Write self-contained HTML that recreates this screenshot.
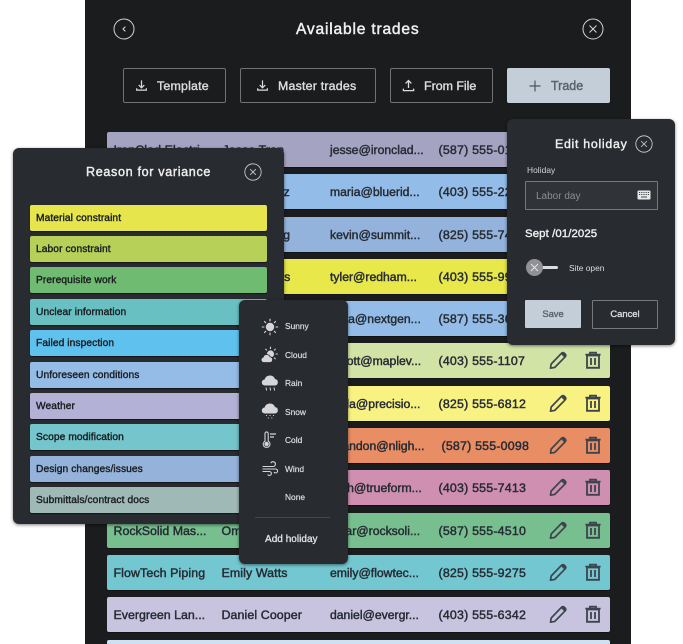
<!DOCTYPE html>
<html style="overflow:hidden;width:683px;height:644px"><head><meta charset="utf-8">
<style>
html,body{margin:0;padding:0;background:#fff}
body{width:683px;height:644px;position:relative;overflow:hidden;font-family:"Liberation Sans",Arial,sans-serif}
#wrap{position:absolute;left:0;top:0;width:683px;height:644px;overflow:hidden;contain:paint}
.a{position:absolute}
#main{left:85px;top:0;width:546px;height:644px;background:#1b1c1e}
.t{position:absolute;white-space:nowrap;line-height:14px}
.btn{position:absolute;top:68px;height:33px;border:1px solid #6f7175;border-radius:2px;background:#1b1c1e}
.btn .t{color:#dcdcdc;font-size:12.4px;top:10px;-webkit-text-stroke:.4px #dcdcdc;letter-spacing:.2px}
.row{position:absolute;left:106.5px;width:503.5px;height:35px;border-radius:2px;color:#262b33;box-shadow:0 1px 0 rgba(0,0,0,.35)}
.row .t{top:11px;font-size:12.4px;-webkit-text-stroke:.45px #262b33;letter-spacing:.1px}
.row .e{letter-spacing:0;font-size:12.2px}
.row .p{letter-spacing:.2px}
.row svg{position:absolute;top:7px}
.panel{position:absolute;background:#282b30;border-radius:6px;box-shadow:0 1px 3px rgba(0,0,0,.5)}
.bar{position:absolute;left:17px;width:237px;height:26px;border-radius:2px;color:#1b1e22;box-shadow:0 1px 1px rgba(0,0,0,.5)}
.bar .t{left:6px;top:7px;font-size:10.2px;-webkit-text-stroke:.4px #1b1e22;letter-spacing:.1px}
.m{position:absolute;left:46px;color:#dcdde0;font-size:8.4px;white-space:nowrap;line-height:10px;-webkit-text-stroke:.2px #dcdde0}
.m2 svg{position:absolute;left:22px}
</style></head><body>
<div id="wrap">
<svg width="0" height="0" style="position:absolute">
<symbol id="pen" viewBox="0 0 20 20"><path d="M2.5 18.2l.7-4.2L13.6 3.2c.8-.8 1.9-.8 2.7 0l.9.9c.8.8.8 1.9 0 2.7L6.8 17.4z" fill="none" stroke="currentColor" stroke-width="1.7" stroke-linejoin="round"/><path d="M12.8 3.9l3.6 3.6L17.5 6.2c.6-.8.5-1.7-.1-2.3l-.9-.9c-.7-.6-1.6-.6-2.3 0z" fill="currentColor"/></symbol>
<symbol id="bin" viewBox="0 0 20 20"><path d="M4 5.5h12v12.3H4z" fill="none" stroke="currentColor" stroke-width="1.8"/><path d="M2.4 4.6h15.2M7 4.4V2.6h6v1.8M8 8v7M12 8v7" fill="none" stroke="currentColor" stroke-width="1.8"/></symbol>
<symbol id="x" viewBox="0 0 22 22"><circle cx="11" cy="11" r="10" fill="none" stroke="#d4d5d7" stroke-width="1"/><path d="M7.5 7.5l7 7M14.5 7.5l-7 7" stroke="#d4d5d7" stroke-width="1" fill="none"/></symbol>
<symbol id="dl" viewBox="0 0 14 14"><path d="M7 1.5v7.5M4 6.5L7 9.5l3-3M1.8 10v2h10.4v-2" fill="none" stroke="#dcdcdc" stroke-width="1.3"/></symbol>
</svg>

<div class="a" id="main"></div>
<svg class="a" style="left:113px;top:18px" width="22" height="22" viewBox="0 0 22 22"><circle cx="11" cy="11" r="10" fill="none" stroke="#d4d5d7" stroke-width="1"/><path d="M12.4 8.6L10 11l2.4 2.4" stroke="#d4d5d7" stroke-width="1.1" fill="none"/></svg>
<svg class="a" style="left:582px;top:18px" width="22" height="22"><use href="#x"/></svg>
<div class="t" style="left:296px;top:21px;color:#f0f0f0;font-size:15.6px;line-height:17px;letter-spacing:.8px;-webkit-text-stroke:.45px #f0f0f0">Available trades</div>

<div class="btn" style="left:123px;width:101px"><svg class="a" style="left:11px;top:10px" width="13" height="13"><use href="#dl"/></svg><div class="t" style="left:33px">Template</div></div>
<div class="btn" style="left:240px;width:134px"><svg class="a" style="left:15px;top:10px" width="13" height="13"><use href="#dl"/></svg><div class="t" style="left:37px">Master trades</div></div>
<div class="btn" style="left:390px;width:101px"><svg class="a" style="left:11px;top:10px" width="13" height="13"><path d="M6.5 9V1.8M3.6 4.4L6.5 1.5l2.9 2.9M1.4 9.6v2h10.2v-2" fill="none" stroke="#dcdcdc" stroke-width="1.3"/></svg><div class="t" style="left:33px;letter-spacing:0">From File</div></div>
<div class="a" style="left:507px;top:68px;width:103px;height:35px;background:#c3ced8;border-radius:2px"><svg class="a" style="left:22px;top:12px" width="12" height="12"><path d="M6 .5v11M.5 6h11" stroke="#4c5660" stroke-width="1.2"/></svg><div class="t" style="left:44px;top:11px;color:#59626c;font-size:12.5px;-webkit-text-stroke:.4px #59626c">Trade</div></div>

<div class="row" style="top:131.9px;background:#a5a3c2"><div class="t" style="left:7px">IronClad Electri...</div><div class="t" style="left:116px">Jesse Tran</div><div class="t e" style="left:223.5px">jesse@ironclad...</div><div class="t p" style="left:332px">(587) 555-0199</div></div>
<div class="row" style="top:174.2px;background:#93bde8"><div class="t" style="left:114px">Maria Lopez</div><div class="t e" style="left:223.5px">maria@bluerid...</div><div class="t p" style="left:332px">(403) 555-2233</div></div>
<div class="row" style="top:216.5px;background:#93b3dc"><div class="t" style="left:116px">Kevin Wong</div><div class="t e" style="left:223.5px">kevin@summit...</div><div class="t p" style="left:332px">(825) 555-7421</div></div>
<div class="row" style="top:258.8px;background:#e8e84a"><div class="t" style="left:109px">Tyler Roberts</div><div class="t e" style="left:223.5px">tyler@redham...</div><div class="t p" style="left:332px">(403) 555-9988</div></div>
<div class="row" style="top:301.1px;background:#93bde8"><div class="t" style="left:116px">Anita Shah</div><div class="t e" style="left:222px">anita@nextgen...</div><div class="t p" style="left:332px">(587) 555-3610</div></div>
<div class="row" style="top:343.4px;background:#d2e3a6"><div class="t e" style="left:228px">scott@maplev...</div><div class="t p" style="left:332px">(403) 555-1107</div><svg style="left:441px;color:#3d444e" width="20" height="20"><use href="#pen"/></svg><svg style="left:476px;color:#3d444e" width="20" height="20"><use href="#bin"/></svg></div>
<div class="row" style="top:385.7px;background:#f8f282"><div class="t e" style="left:223px">carla@precisio...</div><div class="t p" style="left:332px">(825) 555-6812</div><svg style="left:441px;color:#3d444e" width="20" height="20"><use href="#pen"/></svg><svg style="left:476px;color:#3d444e" width="20" height="20"><use href="#bin"/></svg></div>
<div class="row" style="top:428px;background:#e88d64"><div class="t e" style="left:225px">brandon@nligh...</div><div class="t p" style="left:335px">(587) 555-0098</div><svg style="left:441px;color:#3d444e" width="20" height="20"><use href="#pen"/></svg><svg style="left:476px;color:#3d444e" width="20" height="20"><use href="#bin"/></svg></div>
<div class="row" style="top:470.3px;background:#cf8fb0"><div class="t e" style="left:225px">josh@trueform...</div><div class="t p" style="left:332px">(403) 555-7413</div><svg style="left:441px;color:#3d444e" width="20" height="20"><use href="#pen"/></svg><svg style="left:476px;color:#3d444e" width="20" height="20"><use href="#bin"/></svg></div>
<div class="row" style="top:512.6px;background:#78bf8f"><div class="t" style="left:7px;letter-spacing:0">RockSolid Mas...</div><div class="t" style="left:115px">Omar Ali</div><div class="t e" style="left:222px">omar@rocksoli...</div><div class="t p" style="left:332px">(587) 555-4510</div><svg style="left:441px;color:#3d444e" width="20" height="20"><use href="#pen"/></svg><svg style="left:476px;color:#3d444e" width="20" height="20"><use href="#bin"/></svg></div>
<div class="row" style="top:554.9px;background:#73c7d1"><div class="t" style="left:7px">FlowTech Piping</div><div class="t" style="left:115px">Emily Watts</div><div class="t e" style="left:223.5px">emily@flowtec...</div><div class="t p" style="left:332px">(825) 555-9275</div><svg style="left:441px;color:#3d444e" width="20" height="20"><use href="#pen"/></svg><svg style="left:476px;color:#3d444e" width="20" height="20"><use href="#bin"/></svg></div>
<div class="row" style="top:597.2px;background:#c8c4e0"><div class="t" style="left:7px;letter-spacing:0">Evergreen Lan...</div><div class="t" style="left:115px">Daniel Cooper</div><div class="t e" style="left:223.5px">daniel@evergr...</div><div class="t p" style="left:332px">(403) 555-6342</div><svg style="left:441px;color:#3d444e" width="20" height="20"><use href="#pen"/></svg><svg style="left:476px;color:#3d444e" width="20" height="20"><use href="#bin"/></svg></div>
<div class="row" style="top:639.5px;height:5px;background:#cfe0f2"></div>

<!-- Reason for variance -->
<div class="panel" style="left:13px;top:148px;width:271px;height:376px">
<div class="t" style="left:73px;top:17px;color:#efefef;font-size:12.6px;letter-spacing:.65px;-webkit-text-stroke:.4px #efefef">Reason for variance</div>
<svg class="a" style="left:231px;top:15px" width="18" height="18"><use href="#x"/></svg>
<div class="bar" style="top:56.5px;background:#e6e64c"><div class="t">Material constraint</div></div>
<div class="bar" style="top:88px;background:#b6d058"><div class="t">Labor constraint</div></div>
<div class="bar" style="top:119.4px;background:#6fbb72"><div class="t">Prerequisite work</div></div>
<div class="bar" style="top:150.8px;background:#69c0c2"><div class="t">Unclear information</div></div>
<div class="bar" style="top:182.2px;background:#5fc2ee"><div class="t">Failed inspection</div></div>
<div class="bar" style="top:213.6px;background:#94bce6"><div class="t">Unforeseen conditions</div></div>
<div class="bar" style="top:245px;background:#b4b1d6"><div class="t">Weather</div></div>
<div class="bar" style="top:276.4px;background:#74c5cc"><div class="t">Scope modification</div></div>
<div class="bar" style="top:307.8px;background:#95b3da"><div class="t">Design changes/issues</div></div>
<div class="bar" style="top:339.2px;background:#9fb9b7"><div class="t">Submittals/contract docs</div></div>
</div>

<!-- Weather menu -->
<div class="panel m2" style="left:239px;top:300px;width:109px;height:264px">
<svg style="top:18px" width="18" height="18" viewBox="0 0 18 18"><circle cx="9" cy="9" r="4.2" fill="#d6d6d8"/><path d="M9 .8v2.6M9 14.6v2.6M.8 9h2.6M14.6 9h2.6M3.2 3.2L5 5M13 13l1.8 1.8M3.2 14.8L5 13M13 5l1.8-1.8" stroke="#d6d6d8" stroke-width="1.1"/></svg>
<div class="m" style="top:21px">Sunny</div>
<svg style="top:46px" width="18" height="18" viewBox="0 0 18 18"><circle cx="9.5" cy="8" r="3.6" fill="#d6d6d8"/><path d="M9.5 .8v2.2M16.8 8h-2.2M4.4 2.9l1.5 1.5M14.6 2.9l-1.5 1.5M14.6 13.1l-1.5-1.5" stroke="#d6d6d8" stroke-width="1.1"/><path d="M2.5 16.5a2.7 2.7 0 0 1-.3-5.3 3.6 3.6 0 0 1 6.8-.5 3 3 0 0 1 .6 5.8z" fill="#d6d6d8" stroke="#282b30" stroke-width=".8"/></svg>
<div class="m" style="top:50px">Cloud</div>
<svg style="top:74px" width="18" height="18" viewBox="0 0 18 18"><path d="M4 11.5a3 3 0 0 1-.4-6A5.5 5.5 0 0 1 14 5a3.3 3.3 0 0 1 .2 6.5z" fill="#d6d6d8"/><path d="M5 13.5l.6 3M9 13.5l.6 3M13 13.5l.6 3" stroke="#d6d6d8" stroke-width="1"/></svg>
<div class="m" style="top:78px">Rain</div>
<svg style="top:102px" width="18" height="18" viewBox="0 0 18 18"><path d="M4 11.5a3 3 0 0 1-.4-6A5.5 5.5 0 0 1 14 5a3.3 3.3 0 0 1 .2 6.5z" fill="#d6d6d8"/><path d="M5 13.5h1M8.5 13.5h1M12 13.5h1M6.8 16h1M10.3 16h1" stroke="#d6d6d8" stroke-width="1"/></svg>
<div class="m" style="top:107px">Snow</div>
<svg style="top:131px" width="18" height="18" viewBox="0 0 18 18"><path d="M4 2.5a1.6 1.6 0 0 1 3.2 0v7.6a3.4 3.4 0 1 1-3.2 0z" fill="none" stroke="#d6d6d8" stroke-width="1.1"/><circle cx="5.6" cy="13" r="2.2" fill="#d6d6d8"/><path d="M9 3h6M9 6h4" stroke="#d6d6d8" stroke-width="1.3"/></svg>
<div class="m" style="top:135px">Cold</div>
<svg style="top:159px" width="18" height="18" viewBox="0 0 18 18"><path d="M1.5 7.5h10.5a2.4 2.4 0 1 0-2.2-3.4M1.5 10h13.2a2 2 0 1 1-1.8 3M1.5 12.5h7a2 2 0 1 1-1.8 3" fill="none" stroke="#d6d6d8" stroke-width="1.1"/></svg>
<div class="m" style="top:164px">Wind</div>
<div class="m" style="top:192px">None</div>
<div class="a" style="left:16px;top:217px;width:75px;height:1px;background:#44474c"></div>
<div class="t" style="left:26px;top:231px;color:#e2e3e5;font-size:10px;-webkit-text-stroke:.3px #e2e3e5;line-height:14px;margin-top:0;padding-top:2px;letter-spacing:.03px">Add holiday</div>
</div>

<!-- Edit holiday -->
<div class="panel" style="left:507px;top:119px;width:168px;height:226px">
<div class="t" style="left:48px;top:18px;color:#efefef;font-size:12.4px;letter-spacing:.7px;-webkit-text-stroke:.4px #efefef">Edit holiday</div>
<svg class="a" style="left:128px;top:16px" width="18" height="18"><use href="#x"/></svg>
<div class="t" style="left:20px;top:44px;color:#d4d5d7;font-size:8.4px;letter-spacing:.05px">Holiday</div>
<div class="a" style="left:18px;top:62px;width:131px;height:27px;border:1px solid #75787c;border-radius:1px;background:#303338"></div>
<div class="t" style="left:29px;top:71px;color:#8c8f93;font-size:10px">Labor day</div>
<svg class="a" style="left:130px;top:71px" width="14" height="10" viewBox="0 0 14 10"><rect x=".5" y=".5" width="13" height="9" rx="1" fill="#e8e8e8"/><path d="M2 2.5h10M2 4.5h10" stroke="#44474c" stroke-width="1" stroke-dasharray="1 .8"/><path d="M4 7h6" stroke="#44474c" stroke-width="1"/></svg>
<div class="t" style="left:18px;top:108px;color:#efefef;font-size:11.4px;letter-spacing:.1px;-webkit-text-stroke:.4px #efefef">Sept /01/2025</div>
<div class="a" style="left:30px;top:147px;width:21px;height:3px;border-radius:2px;background:#dcdde0"></div>
<div class="a" style="left:19px;top:140px;width:17px;height:17px;border-radius:50%;background:#8f9194"></div>
<svg class="a" style="left:23px;top:144px" width="9" height="9"><path d="M1 1l7 7M8 1L1 8" stroke="#e4e4e6" stroke-width="1"/></svg>
<div class="t" style="left:62px;top:142px;color:#dcdde0;font-size:8.4px">Site open</div>
<div class="a" style="left:18px;top:181px;width:56px;height:28px;background:#c3ced8;border-radius:1px"><div class="t" style="left:0;width:56px;text-align:center;top:7px;color:#59626c;font-size:9.4px;-webkit-text-stroke:.35px #59626c">Save</div></div>
<div class="a" style="left:85px;top:181px;width:64px;height:27px;border:1px solid #75787c;border-radius:1px"><div class="t" style="left:0;width:64px;text-align:center;top:6px;color:#dcdde0;font-size:9.4px;-webkit-text-stroke:.35px #dcdde0">Cancel</div></div>
</div>
</div>
</body></html>
